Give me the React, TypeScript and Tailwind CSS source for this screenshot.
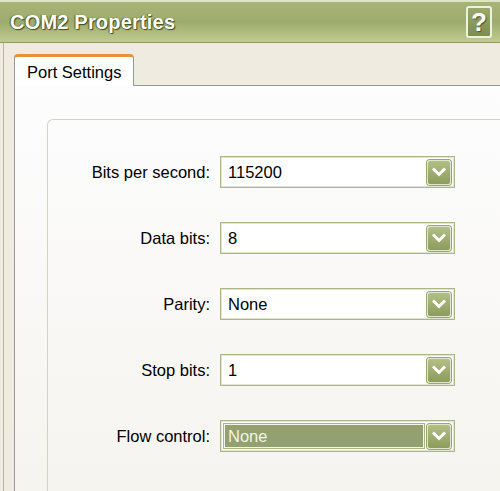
/* ── Data ───────────────────────────────────────────────────────────────── */
type Field = { label: string; value: string; selected?: boolean };

const FIELDS: Field[] = [
  { label: "Bits per second:", value: "115200" },
  { label: "Data bits:",       value: "8" },
  { label: "Parity:",          value: "None" },
  { label: "Stop bits:",       value: "1" },
  { label: "Flow control:",    value: "None", selected: true },
];

/* ── Pieces ─────────────────────────────────────────────────────────────── */
function DropButton() {
  return (
    <div className="w-[24px] h-[25px] rounded-[3px] border border-[#dfe5c6] bg-gradient-to-b from-[#b2c084] to-[#8c9c5c] shadow-[0_0_0_1px_#98a670] flex items-center justify-center">
      <svg width="14" height="10" viewBox="0 0 14 10">
        <polyline points="2,2.5 7,7.5 12,2.5" fill="none" stroke="#ffffff" strokeWidth="3" strokeLinecap="square" />
      </svg>
    </div>
  );
}

function Combo({ value, selected }: { value: string; selected?: boolean }) {
  return (
    <div className="w-[235px] h-[32px] border border-[#aab685] shadow-[inset_0_0_0_1px_#e2e6cc] bg-white flex items-center pl-[3px] pr-[3px] gap-[3px]">
      {selected ? (
        <div className="flex-1 h-[24px] bg-[#93a06f] border border-[#f4f5ea] shadow-[0_0_0_1px_#a9b585] flex items-center pl-[3px] text-[#f2f4e8]">
          {value}
        </div>
      ) : (
        <div className="flex-1 pl-[4px] text-black">{value}</div>
      )}
      <DropButton />
    </div>
  );
}

/* ── Component ──────────────────────────────────────────────────────────── */
export default function App() {
  return (
    <div className="w-[500px] h-[491px] overflow-hidden flex flex-col bg-[#efebe0] font-['Liberation_Sans',Arial,sans-serif] text-[16.5px]">

      {/* Title bar */}
      <div className="h-[42px] flex items-center justify-between pl-[10px] pr-[8px] border-t-[2px] border-[#dfe3c8] bg-gradient-to-b from-[#a8b477] via-[#9dac6c] to-[#c1cb90]">
        <span className="text-[20px] font-bold text-white tracking-[0.2px] [text-shadow:1px_1px_1px_#3e4a22,-1px_0_1px_#55602f]">
          COM2 Properties
        </span>
        <div className="w-[26px] h-[32px] rounded-[3px] border-2 border-[#eef1dd] bg-gradient-to-b from-[#9aa86a] to-[#7d8c50] flex items-center justify-center">
          <span className="text-[26px] font-bold text-white leading-none [text-shadow:1px_1px_1px_#4a5628]">?</span>
        </div>
      </div>
      <div className="h-[1px] bg-[#8f9c62]" />

      {/* Body */}
      <div className="flex-1 flex flex-col pl-[3px]">
        <div className="flex-1 flex flex-col border-l border-[#b8bc9c] pl-[10px] pt-[11px]">

          {/* Tab strip */}
          <div className="flex h-[32px]">
            <div className="w-[120px] bg-white border-t-[3px] border-x border-[#e8913a] border-x-[#919b9c] rounded-t-[4px] flex items-center pl-[12px] pt-[1px] text-black">
              Port Settings
            </div>
            <div className="flex-1 border-b border-[#919b9c]" />
          </div>

          {/* Tab page */}
          <div className="flex-1 flex flex-col border-l border-[#919b9c] bg-gradient-to-b from-[#fdfdfe] to-[#f5f4ef] pl-[32px] pt-[33px]">
            <div className="flex-1 flex flex-col gap-[34px] border-l border-t border-[#d3d3c4] rounded-tl-[6px] pt-[36px]">
              {FIELDS.map(f => (
                <div key={f.label} className="flex items-center gap-[10px]">
                  <span className="w-[162px] text-right text-black">{f.label}</span>
                  <Combo value={f.value} selected={f.selected} />
                </div>
              ))}
            </div>
          </div>

        </div>
      </div>
    </div>
  );
}
